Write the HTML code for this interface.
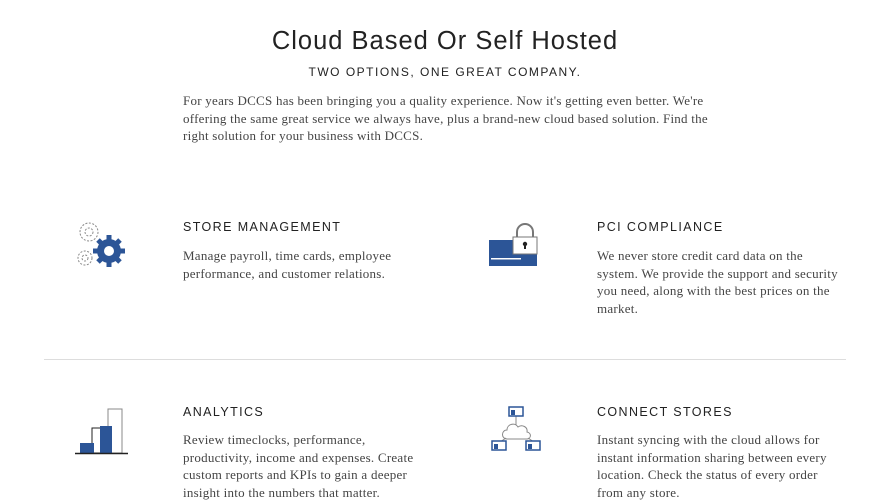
<!DOCTYPE html>
<html><head><meta charset="utf-8"><style>
body{margin:0;width:890px;height:500px;overflow:hidden;background:#fff;position:relative;font-family:"Liberation Serif",serif;color:#333}
.a{position:absolute}
h1{position:absolute;margin:0;left:0;width:890px;top:27px;text-align:center;font:400 25.5px "Liberation Sans",sans-serif;color:#222;letter-spacing:1px}
.sub{left:0;width:890px;top:65px;text-align:center;font:12px "Liberation Sans",sans-serif;letter-spacing:1.5px;color:#222}
.p{font-size:13px;letter-spacing:.25px;line-height:17.5px;color:#444}
.h{font:12.5px "Liberation Sans",sans-serif;letter-spacing:1.4px;color:#222}
</style></head><body>
<h1>Cloud Based Or Self Hosted</h1>
<div class="a sub">TWO OPTIONS, ONE GREAT COMPANY.</div>
<div class="a p" style="left:183px;top:92px;width:535px">For years DCCS has been bringing you a quality experience. Now it's getting even better. We're offering the same great service we always have, plus a brand-new cloud based solution. Find the right solution for your business with DCCS.</div>

<div class="a h" style="left:183px;top:220px">STORE MANAGEMENT</div>
<div class="a p" style="left:183px;top:247px;width:230px">Manage payroll, time cards, employee performance, and customer relations.</div>
<div class="a h" style="left:597px;top:220px">PCI COMPLIANCE</div>
<div class="a p" style="left:597px;top:247px;width:250px">We never store credit card data on the system. We provide the support and security you need, along with the best prices on the market.</div>
<div class="a" style="left:44px;top:359px;width:802px;height:1px;background:#ddd"></div>
<div class="a h" style="left:183px;top:405px">ANALYTICS</div>
<div class="a p" style="left:183px;top:431px;width:240px">Review timeclocks, performance, productivity, income and expenses. Create custom reports and KPIs to gain a deeper insight into the numbers that matter.</div>
<div class="a h" style="left:597px;top:405px">CONNECT STORES</div>
<div class="a p" style="left:597px;top:431px;width:245px">Instant syncing with the cloud allows for instant information sharing between every location. Check the status of every order from any store.</div>

<svg class="a" style="left:70px;top:218px" width="60" height="52" viewBox="0 0 60 52">
<g fill="none" stroke="#888" stroke-width="1" stroke-dasharray="2 1.5"><circle cx="19" cy="14" r="9"/><circle cx="19" cy="14" r="4"/><circle cx="15" cy="40" r="7"/><circle cx="15" cy="40" r="3"/></g>
<g fill="#2c5597"><circle cx="39" cy="33" r="12"/><g stroke="#2c5597" stroke-width="5"><line x1="39" y1="17" x2="39" y2="49"/><line x1="23" y1="33" x2="55" y2="33"/><line x1="28" y1="22" x2="50" y2="44"/><line x1="50" y1="22" x2="28" y2="44"/></g></g>
<circle cx="39" cy="33" r="5" fill="#fff"/>
</svg>
<svg class="a" style="left:487px;top:220px" width="52" height="48" viewBox="0 0 52 48">
<rect x="2" y="20" width="48" height="26" fill="#2c5597"/>
<path d="M30 22V12a8 8 0 0 1 16 0V22" fill="none" stroke="#777" stroke-width="2"/>
<rect x="26" y="17" width="24" height="17" fill="#fff" stroke="#777"/>
<circle cx="38" cy="24" r="2.2" fill="#222"/><rect x="37" y="24" width="2" height="5" fill="#222"/>
<rect x="4" y="38" width="30" height="1.5" fill="#fff"/>
</svg>
<svg class="a" style="left:72px;top:403px" width="58" height="54" viewBox="0 0 58 54">
<rect x="36" y="6" width="14" height="44" fill="#fff" stroke="#888"/>
<rect x="20" y="25" width="12" height="25" fill="#fff" stroke="#222"/>
<rect x="28" y="23" width="12" height="27" fill="#2c5597"/>
<rect x="8" y="40" width="14" height="10" fill="#2c5597"/>
<line x1="3" y1="50.5" x2="56" y2="50.5" stroke="#222" stroke-width="1.5"/>
</svg>
<svg class="a" style="left:490px;top:405px" width="52" height="46" viewBox="0 0 52 46">
<path d="M17 34c-6 0-6-9 0-9 0-6 8-8 11-3 4-3 10 0 9 5 5 1 4 7 0 7z" fill="none" stroke="#888"/>
<line x1="26" y1="10" x2="26" y2="20" stroke="#888"/><line x1="16" y1="33" x2="10" y2="37" stroke="#888"/><line x1="38" y1="33" x2="44" y2="37" stroke="#888"/>
<g fill="#fff" stroke="#2c5597" stroke-width="1.5"><rect x="19" y="2" width="14" height="9"/><rect x="2" y="36" width="14" height="9"/><rect x="36" y="36" width="14" height="9"/></g>
<g fill="#2c5597"><rect x="21" y="5" width="4" height="5"/><rect x="4" y="39" width="4" height="5"/><rect x="38" y="39" width="4" height="5"/></g>
</svg>
</body></html>
